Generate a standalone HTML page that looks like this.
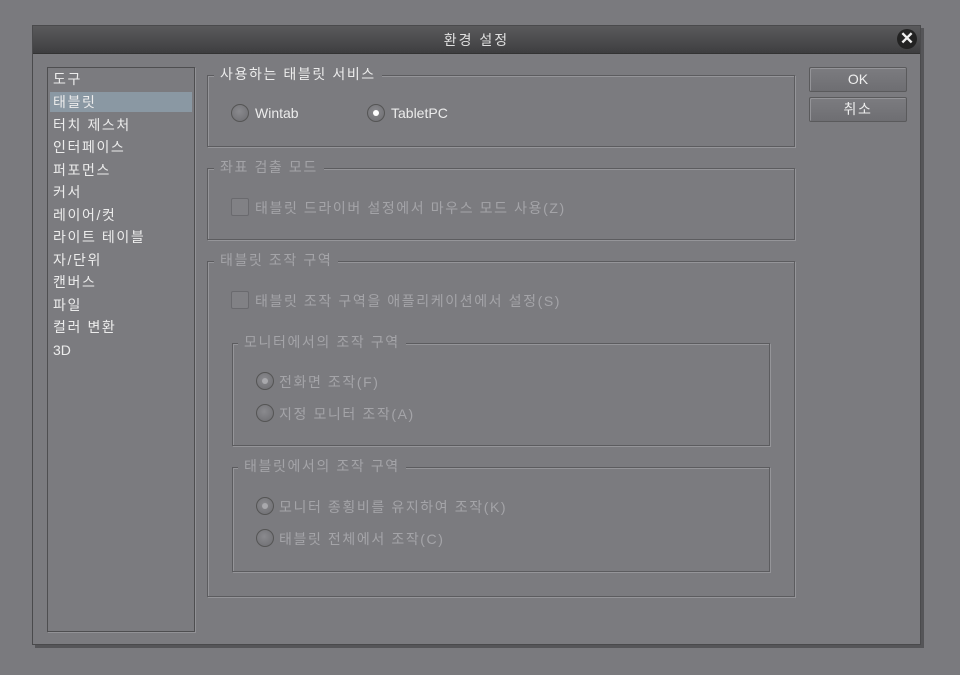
<!DOCTYPE html>
<html><head><meta charset="utf-8"><style>
*{margin:0;padding:0;box-sizing:border-box}
body{width:960px;height:675px;background:#7a7a7e;position:relative;overflow:hidden;font-family:"Liberation Sans","Noto Sans CJK KR","NanumGothic",sans-serif;font-size:14px;color:#ececec;letter-spacing:1.6px}
.a{position:absolute;white-space:nowrap}
.l{letter-spacing:0}
#dlg{left:32px;top:25px;width:889px;height:620px;background:#7b7b7f;border:1px solid #4a4a4c;box-shadow:3px 3px 0 #555558}
#title{left:33px;top:26px;width:887px;height:28px;background:linear-gradient(#5a5a5c,#3e3e40);border-bottom:1px solid #333;text-align:center;line-height:28px;color:#e0e0e0;letter-spacing:2px}
#close{left:897px;top:29px;width:20px;height:20px;border-radius:50%;background:#222;color:#eee;font-weight:bold;font-size:17px;line-height:20px;text-align:center;letter-spacing:0}
#list{left:47px;top:67px;width:148px;height:565px;border:1px solid #4e4e50;box-shadow:1px 1px 0 #929296}
.it{position:absolute;left:5px;height:20px;line-height:20px;width:140px}
.sel{background:#8a98a3;left:2px;padding-left:3px;width:142px}
.g{border:1px solid #5c5c5f;box-shadow:1px 1px 0 #959599,inset 1px 1px 0 #959599}
.lg{position:absolute;background:#7b7b7f;padding:0 6px;line-height:16px;white-space:nowrap}
.dis{color:#a4a4a8}
.rb{position:absolute;width:18px;height:18px;border-radius:50%;background:radial-gradient(circle at 45% 40%,#8a8a8e,#6c6c70);border:1px solid #555}
.rb.on::after{content:"";position:absolute;left:5px;top:5px;width:6px;height:6px;border-radius:50%;background:#fff}
.rb.don::after{content:"";position:absolute;left:5px;top:5px;width:6px;height:6px;border-radius:50%;background:#a8a8ac}
.cb{position:absolute;width:18px;height:18px;background:#818185;border:1px solid #6a6a6e;border-radius:2px}
.btn{position:absolute;left:809px;width:98px;height:25px;border:1px solid #5a5a5c;border-radius:2px;background:linear-gradient(#7c7c80,#6e6e72);box-shadow:inset 1px 1px 0 #949498;text-align:center;line-height:23px;color:#eee}
</style></head><body>
<div id="dlg" class="a"></div>
<div id="title" class="a">환경 설정</div>
<div id="close" class="a">✕</div>
<div id="list" class="a">
<div class="it" style="top:1px">도구</div>
<div class="it sel" style="top:24px">태블릿</div>
<div class="it" style="top:47px">터치 제스처</div>
<div class="it" style="top:69px">인터페이스</div>
<div class="it" style="top:92px">퍼포먼스</div>
<div class="it" style="top:114px">커서</div>
<div class="it" style="top:137px">레이어/컷</div>
<div class="it" style="top:159px">라이트 테이블</div>
<div class="it" style="top:182px">자/단위</div>
<div class="it" style="top:204px">캔버스</div>
<div class="it" style="top:227px">파일</div>
<div class="it" style="top:249px">컬러 변환</div>
<div class="it l" style="top:272px">3D</div>
</div>

<div class="a g" style="left:207px;top:75px;width:588px;height:72px"></div>
<div class="lg" style="left:214px;top:66px">사용하는 태블릿 서비스</div>
<div class="rb" style="left:231px;top:104px"></div><div class="a l" style="left:255px;top:105px">Wintab</div>
<div class="rb on" style="left:367px;top:104px"></div><div class="a l" style="left:391px;top:105px">TabletPC</div>

<div class="a g" style="left:207px;top:168px;width:588px;height:72px"></div>
<div class="lg dis" style="left:214px;top:159px">좌표 검출 모드</div>
<div class="cb" style="left:231px;top:198px"></div><div class="a dis" style="left:255px;top:198px">태블릿 드라이버 설정에서 마우스 모드 사용(Z)</div>

<div class="a g" style="left:207px;top:261px;width:588px;height:336px"></div>
<div class="lg dis" style="left:214px;top:252px">태블릿 조작 구역</div>
<div class="cb" style="left:231px;top:291px"></div><div class="a dis" style="left:255px;top:291px">태블릿 조작 구역을 애플리케이션에서 설정(S)</div>

<div class="a g" style="left:232px;top:343px;width:538px;height:103px"></div>
<div class="lg dis" style="left:238px;top:334px">모니터에서의 조작 구역</div>
<div class="rb don" style="left:256px;top:372px"></div><div class="a dis" style="left:279px;top:372px">전화면 조작(F)</div>
<div class="rb" style="left:256px;top:404px"></div><div class="a dis" style="left:279px;top:404px">지정 모니터 조작(A)</div>

<div class="a g" style="left:232px;top:467px;width:538px;height:105px"></div>
<div class="lg dis" style="left:238px;top:458px">태블릿에서의 조작 구역</div>
<div class="rb don" style="left:256px;top:497px"></div><div class="a dis" style="left:279px;top:497px">모니터 종횡비를 유지하여 조작(K)</div>
<div class="rb" style="left:256px;top:529px"></div><div class="a dis" style="left:279px;top:529px">태블릿 전체에서 조작(C)</div>

<div class="btn l" style="top:67px">OK</div>
<div class="btn" style="top:97px">취소</div>
</body></html>
